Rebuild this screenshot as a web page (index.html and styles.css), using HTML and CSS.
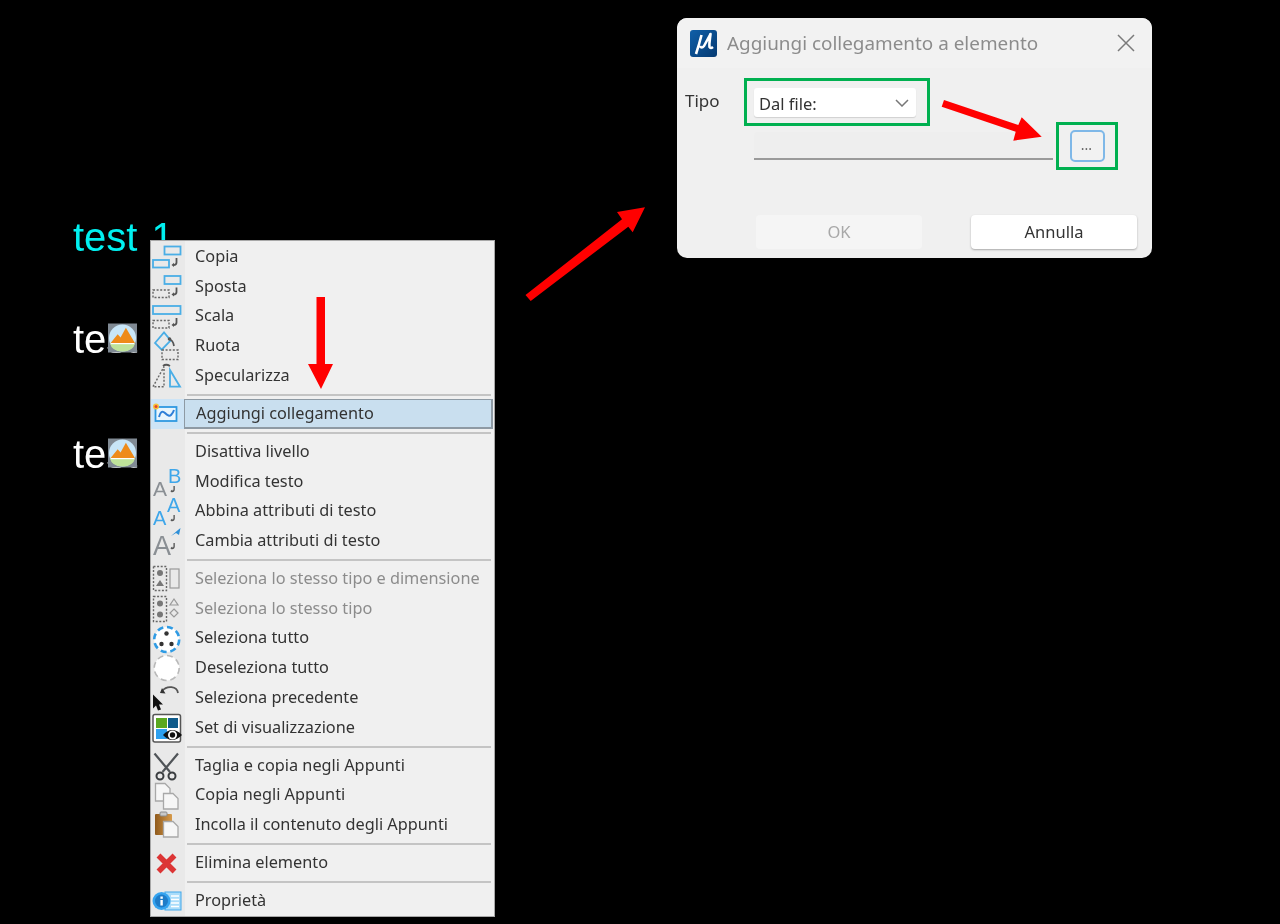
FILE: index.html
```html
<!DOCTYPE html>
<html lang="it">
<head>
<meta charset="utf-8">
<title>Aggiungi collegamento</title>
<link rel="stylesheet" href="styles.css">
</head>
<body>
<svg class="defs" width="0" height="0" aria-hidden="true">
  <defs>
    <symbol id="hook" viewBox="0 0 8 10" overflow="visible">
      <path d="M5.5 1V5.5Q5.5 8 2.5 8" class="hk"/>
      <path d="M0.5 8L3 5.8V10Z" class="hkf"/>
    </symbol>
    <linearGradient id="logo" x1="0" y1="0" x2="1" y2="1">
      <stop offset="0" stop-color="#0f5fa8"/>
      <stop offset="1" stop-color="#063a72"/>
    </linearGradient>
    <linearGradient id="board" x1="0" y1="0" x2="1" y2="0">
      <stop offset="0" stop-color="#8f5a1c"/>
      <stop offset="1" stop-color="#d79a4a"/>
    </linearGradient>
  </defs>
</svg>
<main class="stage">
  <div class="label label-1">test 1</div>
  <div class="label label-2">test
    <svg class="placeholder" viewBox="0 0 30 30"><rect width="30" height="30" fill="#808a94"/><circle cx="15" cy="15" r="14" fill="#c8e6f8"/><path d="M2.500 20.500L10 11 13 14.500 18.500 4.500 28 20.500Z" fill="#ee8b1a"/><path d="M2 20.500H28Q26 29 15 29 4 29 2 20.500Z" fill="#bfe39a"/><path d="M3 20.800H27" stroke="#fff" stroke-width="1.200"/></svg>
  </div>
  <div class="label label-3">test
    <svg class="placeholder" viewBox="0 0 30 30"><rect width="30" height="30" fill="#808a94"/><circle cx="15" cy="15" r="14" fill="#c8e6f8"/><path d="M2.500 20.500L10 11 13 14.500 18.500 4.500 28 20.500Z" fill="#ee8b1a"/><path d="M2 20.500H28Q26 29 15 29 4 29 2 20.500Z" fill="#bfe39a"/><path d="M3 20.800H27" stroke="#fff" stroke-width="1.200"/></svg>
  </div>

  <nav class="menu">
    <div class="row"><span class="gut"><svg class="ico" viewBox="0 0 32 30"><rect class="b" x="13.500" y="4.500" width="16" height="8"/><rect class="b" x="2" y="18" width="16" height="7.500"/><use href="#hook" x="20" y="15" width="8" height="10"/></svg></span><span class="txt">Copia</span></div>
    <div class="row"><span class="gut"><svg class="ico" viewBox="0 0 32 30"><rect class="b" x="13.500" y="4" width="16" height="8"/><rect class="d" x="2" y="18" width="16" height="7.500"/><use href="#hook" x="20" y="14.500" width="8" height="10"/></svg></span><span class="txt">Sposta</span></div>
    <div class="row"><span class="gut"><svg class="ico" viewBox="0 0 32 30"><rect class="b" x="2" y="4" width="27.500" height="8"/><rect class="d" x="2" y="18.500" width="16" height="7.500"/><use href="#hook" x="20" y="15" width="8" height="10"/></svg></span><span class="txt">Scala</span></div>
    <div class="row"><span class="gut"><svg class="ico" viewBox="0 0 32 30"><path class="b" d="M4 12L13 1.500 19.700 9.500 10.700 18.700Z"/><rect class="d" x="11" y="19" width="16" height="9.500"/><path class="hk" d="M18 8Q22 9 23 15"/><circle cx="18.500" cy="8" r="1.800" fill="#555"/></svg></span><span class="txt">Ruota</span></div>
    <div class="row"><span class="gut"><svg class="ico" viewBox="0 0 32 30"><path class="d" d="M2 25.700L13 5.700V25.700Z"/><path class="b" d="M19 9L29 25.700H19Z"/><path class="hk" d="M12 5Q15 2.500 19 5"/></svg></span><span class="txt">Specularizza</span></div>
    <div class="sep"></div>
    <div class="row row-on"><span class="gut"><svg class="ico" viewBox="0 0 32 30"><rect class="b" x="4.500" y="8" width="21" height="14" fill-opacity="1"/><path class="w" d="M8 18Q10 10 14 14T20 16 23 11"/><circle cx="5" cy="7.500" r="3" fill="#f5c23c"/><circle cx="5" cy="7.500" r="1.500" fill="#e8452c"/></svg></span><span class="txt">Aggiungi collegamento</span></div>
    <div class="sep"></div>
    <div class="row"><span class="gut"></span><span class="txt">Disattiva livello</span></div>
    <div class="row"><span class="gut"><svg class="ico" viewBox="0 0 32 30"><text x="2" y="29" class="il il-g" font-size="21">A</text><text x="17" y="16" class="il il-b" font-size="20">B</text><use href="#hook" x="19" y="18" width="6" height="8"/></svg></span><span class="txt">Modifica testo</span></div>
    <div class="row"><span class="gut"><svg class="ico" viewBox="0 0 32 30"><text x="2" y="29" class="il il-b" font-size="20">A</text><text x="16" y="16" class="il il-b" font-size="20">A</text><use href="#hook" x="19" y="18" width="6" height="8"/></svg></span><span class="txt">Abbina attributi di testo</span></div>
    <div class="row"><span class="gut"><svg class="ico" viewBox="0 0 32 30"><text x="2" y="29" class="il il-g" font-size="27">A</text><path d="M20 10L27 4 29.500 2 28 9 25 7Z" fill="#2e8fd8"/><use href="#hook" x="19" y="16" width="6" height="8"/></svg></span><span class="txt">Cambia attributi di testo</span></div>
    <div class="sep"></div>
    <div class="row row-off"><span class="gut"><svg class="ico" viewBox="0 0 32 30"><rect class="d" x="2.500" y="2.500" width="13" height="24"/><circle cx="9" cy="9" r="3" fill="#777"/><path d="M9 16L13 22H5Z" fill="#777"/><rect class="p" x="19" y="5" width="9" height="19"/></svg></span><span class="txt">Seleziona lo stesso tipo e dimensione</span></div>
    <div class="row row-off"><span class="gut"><svg class="ico" viewBox="0 0 32 30"><rect class="d" x="2.500" y="2.500" width="13" height="25"/><circle cx="9" cy="9.500" r="3" fill="#777"/><circle cx="9" cy="20.500" r="3" fill="#777"/><path class="p" d="M23 5L27 11H19Z"/><path class="p" d="M23 15L27 19 23 23 19 19Z"/></svg></span><span class="txt">Seleziona lo stesso tipo</span></div>
    <div class="row"><span class="gut"><svg class="ico" viewBox="0 0 32 30"><circle class="dc" cx="15.700" cy="15.500" r="12.500"/><circle cx="15.500" cy="9.500" r="2.200" fill="#333"/><circle cx="10.500" cy="20" r="2.200" fill="#333"/><circle cx="20.500" cy="20" r="2.200" fill="#333"/></svg></span><span class="txt">Seleziona tutto</span></div>
    <div class="row"><span class="gut"><svg class="ico" viewBox="0 0 32 30"><circle class="dw" cx="15.700" cy="15" r="12.500"/></svg></span><span class="txt">Deseleziona tutto</span></div>
    <div class="row"><span class="gut"><svg class="ico" viewBox="0 0 32 30"><path d="M2 11.500L12 21.500H8L10 26.500 7 27.500 5 22.500 2 25.500Z" fill="#111"/><path class="hk" d="M27 10C26 3 16 2 11 8"/><path d="M9 10L14.500 10.500 11 5Z" fill="#333"/></svg></span><span class="txt">Seleziona precedente</span></div>
    <div class="row"><span class="gut"><svg class="ico" viewBox="0 0 32 30"><rect x="2" y="1.500" width="27.500" height="27.500" rx="2" fill="#fff" stroke="#555" stroke-width="1.500"/><rect x="5" y="5" width="11" height="10" fill="#5aa820"/><rect x="17" y="5" width="10" height="10" fill="#0e5a8a"/><rect x="5" y="16" width="11" height="10" fill="#2ea0ee"/><path d="M12 22Q21 12 31 22 21 32 12 22Z" fill="#111"/><circle cx="21.500" cy="22" r="4.500" fill="#fff"/><circle cx="21.500" cy="22" r="2.700" fill="#111"/></svg></span><span class="txt">Set di visualizzazione</span></div>
    <div class="sep"></div>
    <div class="row"><span class="gut"><svg class="ico" viewBox="0 0 32 30"><path class="sc" d="M3.500 2.500L19 21M27 2.500L11.500 21"/><circle class="scr" cx="9" cy="25" r="3.500"/><circle class="scr" cx="21" cy="25" r="3.500"/></svg></span><span class="txt">Taglia e copia negli Appunti</span></div>
    <div class="row"><span class="gut"><svg class="ico" viewBox="0 0 32 30"><path class="pg" d="M4.500 2.500H14L19 7.500V20H4.500Z"/><path class="pg" d="M12.500 12.500H22L27 17.500V28H12.500Z"/></svg></span><span class="txt">Copia negli Appunti</span></div>
    <div class="row"><span class="gut"><svg class="ico" viewBox="0 0 32 30"><rect x="4" y="4" width="17" height="21" rx="1" fill="url(#board)"/><rect x="9" y="2" width="7" height="4" rx="1" fill="#c9c9c9" stroke="#8a8a8a"/><path class="pg" d="M12.500 11.500H22L27 16.500V27H12.500Z"/></svg></span><span class="txt">Incolla il contenuto degli Appunti</span></div>
    <div class="sep"></div>
    <div class="row"><span class="gut"><svg class="ico" viewBox="0 0 32 30"><path class="xr" d="M7.500 7.500L23.500 23.500M23.500 7.500L7.500 23.500"/></svg></span><span class="txt">Elimina elemento</span></div>
    <div class="sep"></div>
    <div class="row"><span class="gut"><svg class="ico" viewBox="0 0 32 30"><rect x="14" y="6" width="16" height="18" fill="#a9dcfa" stroke="#42a8ea"/><path d="M20 10H28M20 13.500H28M20 17H28M20 20.500H28" stroke="#fff" stroke-width="1.500"/><circle cx="10.500" cy="15" r="9" fill="#35a4f0"/><circle cx="10.500" cy="15" r="6.500" fill="#1e7cc8"/><rect x="9.400" y="14" width="2.400" height="5.500" fill="#fff"/><rect x="9.400" y="10.500" width="2.400" height="2.300" fill="#fff"/></svg></span><span class="txt">Proprietà</span></div>
  </nav>

  <section class="dialog">
    <header class="dlg-head">
      <svg class="logo" viewBox="0 0 27 27"><rect width="27" height="27" rx="3" fill="url(#logo)"/><path class="logo-m" d="M6 24C8 18 10 11 11.500 5M10 16Q11.500 19 14 16L20.500 4C20 9 19 13 19.500 17Q20.500 19 23 17"/></svg>
      <span class="dlg-title">Aggiungi collegamento a elemento</span>
      <svg class="close" viewBox="0 0 18 18"><path d="M1 1L17 17M17 1L1 17"/></svg>
    </header>
    <div class="dlg-row1">
      <span class="tipo">Tipo</span>
      <div class="frame frame-sel">
        <div class="select"><span class="sel-t">Dal file:</span><svg class="chev" viewBox="0 0 14 8"><path d="M1 1L7 7 13 1"/></svg></div>
      </div>
    </div>
    <div class="dlg-row2">
      <div class="input"></div>
      <div class="frame frame-btn"><div class="browse"><span>...</span></div></div>
    </div>
    <footer class="dlg-foot">
      <button class="btn btn-off" type="button">OK</button>
      <button class="btn btn-on" type="button">Annulla</button>
    </footer>
  </section>

  <svg class="arrows" viewBox="0 0 1280 924">
    <path d="M316.500 297H325V364H333L321 389 308 364H316.500Z"/>
    <path d="M525.500 295L622 219.300 617 212 645 207.300 632.700 232.300 628.300 226.700 530.700 301Z"/>
    <path d="M944 100L1018.300 125 1021.700 117.300 1041.700 136.700 1013.300 140.700 1015.700 131.700 941.700 106.700Z"/>
  </svg>
</main>
</body>
</html>
```
FILE: styles.css
```css
* { box-sizing: border-box; }
html, body { margin: 0; padding: 0; background: #000; }
.defs { position: absolute; }
.stage {
  position: relative;
  width: 1280px;
  height: 924px;
  overflow: hidden;
  background: #000;
  font-family: "Noto Sans", "Open Sans", sans-serif;
  filter: blur(0.6px);
}

/* canvas labels */
.label {
  position: absolute;
  left: 73px;
  font-family: "Liberation Sans", Arial, sans-serif;
  font-size: 40px;
  line-height: 46px;
  color: #fff;
}
.label-1 { top: 214px; color: #00f0f0; word-spacing: 3px; }
.label-2 { top: 316px; }
.label-3 { top: 431px; }
.placeholder {
  position: absolute;
  left: 35px;
  top: 7px;
  width: 29px;
  height: 30px;
}

/* context menu */
.menu {
  position: absolute;
  left: 150px;
  top: 240px;
  width: 345px;
  height: 677px;
  padding-top: 1px;
  background: linear-gradient(to right, #e9e9e9 34px, #f0f0f0 34px);
  border: 1px solid #a8a8a8;
  font-size: 16.3px;
  color: #333;
}
.row {
  display: flex;
  align-items: center;
  height: 29.75px;
}
.gut {
  flex: none;
  display: flex;
  width: 33px;
  height: 100%;
}
.ico {
  width: 32px;
  height: 30px;
  overflow: visible;
}
.txt {
  padding: 0 0 2px 11px;
  white-space: nowrap;
  line-height: 20px;
}
.sep {
  height: 8.2px;
  margin: 0 3px 0 36px;
  position: relative;
  background: linear-gradient(#c4c4c4, #c4c4c4) center / 100% 2px no-repeat;
}
.row-off .txt { color: #8c8c8c; }
.row-on { margin-right: 1px; }
.row-on .gut { background: #cde4f6; }
.row-on .txt {
  flex: 1;
  align-self: stretch;
  display: flex;
  align-items: center;
  background: #c9dfef;
  border: 2px solid #8e9aa4;
  border-width: 1px 2px 2px 1px;
  padding: 0 0 1px 11px;
}

/* icon strokes */
.b { fill: none; stroke: #4aaee6; stroke-width: 1.8; }
.row-on .b { fill: #e9f5fd; stroke: #2f98e0; }
.d { fill: none; stroke: #666; stroke-width: 1.4; stroke-dasharray: 2 1.6; }
.p { fill: none; stroke: #999; stroke-width: 1.2; }
.hk { fill: none; stroke: #555; stroke-width: 1.8; }
.hkf { fill: #555; }
.w { fill: none; stroke: #2f7fd8; stroke-width: 2; }
.il { font-family: "Liberation Sans", sans-serif; }
.il-g { fill: #8a8f94; }
.il-b { fill: #3ea6ea; }
.dc { fill: #fff; stroke: #2f9be4; stroke-width: 2.6; stroke-dasharray: 6 3.8; }
.dw { fill: #fff; stroke: #b9b9b9; stroke-width: 1.6; stroke-dasharray: 6 3.8; }
.sc { fill: none; stroke: #505458; stroke-width: 2.2; }
.scr { fill: none; stroke: #3a3d40; stroke-width: 2; }
.pg { fill: #f6f6f6; stroke: #a8a8a8; stroke-width: 1.3; }
.xr { fill: none; stroke: #dc3535; stroke-width: 5.5; }

/* dialog */
.dialog {
  position: absolute;
  left: 677px;
  top: 18px;
  width: 475px;
  height: 240px;
  display: flex;
  flex-direction: column;
  background: #f0f0f0;
  border-radius: 10px;
  overflow: hidden;
  color: #333;
  font-size: 16.5px;
}
.dlg-head {
  flex: none;
  display: flex;
  align-items: center;
  height: 50px;
  padding: 0 17px 0 13px;
  background: #f2f2f2;
}
.logo { width: 27px; height: 27px; flex: none; }
.logo-m { fill: none; stroke: #fff; stroke-width: 2.6; stroke-linejoin: round; }
.dlg-title {
  flex: 1;
  margin-left: 10px;
  font-size: 18.9px;
  line-height: 26px;
  color: #8c8c8c;
  white-space: nowrap;
}
.close { width: 18px; height: 18px; flex: none; }
.close path { fill: none; stroke: #7a7a7a; stroke-width: 1.5; }
.dlg-row1 {
  display: flex;
  align-items: flex-start;
  margin-top: 10px;
  padding-left: 8px;
}
.tipo { width: 59px; padding-top: 12px; line-height: 22px; font-size: 17px; }
.frame { border: 3px solid #00b050; }
.frame-sel { width: 186px; height: 48px; padding: 7px 11px 6px 7px; }
.select {
  display: flex;
  align-items: center;
  justify-content: space-between;
  height: 29px;
  padding: 0 7px 0 5px;
  background: #fff;
  border-radius: 3px;
  box-shadow: 0 1px 1px #d0d0d0;
}
.sel-t { padding-top: 1px; }
.chev { width: 14px; height: 8px; }
.chev path { fill: none; stroke: #777; stroke-width: 1.5; }
.dlg-row2 {
  display: flex;
  align-items: flex-start;
  gap: 3px;
  margin-top: -4px;
  padding-left: 77px;
}
.input {
  width: 299px;
  height: 28px;
  margin-top: 10px;
  background: #eeeeee;
  border-bottom: 2px solid #9a9a9a;
  border-radius: 3px 3px 0 0;
}
.frame-btn { width: 62px; height: 48px; padding: 5px 10px 5px 11px; }
.browse {
  display: flex;
  align-items: center;
  justify-content: center;
  height: 32px;
  padding: 0 2px 4px 0;
  background: #f2f2f2;
  border: 2px solid #7fb8e8;
  border-radius: 5px;
  color: #666;
  font-size: 14px;
}
.dlg-foot {
  display: flex;
  gap: 49px;
  margin-top: auto;
  padding: 0 15px 9px 79px;
}
.btn {
  flex: none;
  width: 166px;
  height: 34px;
  padding: 0 0 2px;
  border: 0;
  border-radius: 4px;
  font: inherit;
  font-size: 16.5px;
}
.btn-off { background: #f5f5f5; color: #a8a8a8; }
.btn-on { background: #fff; color: #333; box-shadow: 0 1px 2px #a8a8a8; }

/* annotation arrows */
.arrows {
  position: absolute;
  inset: 0;
  width: 1280px;
  height: 924px;
  pointer-events: none;
}
.arrows path { fill: #ff0000; }
```
